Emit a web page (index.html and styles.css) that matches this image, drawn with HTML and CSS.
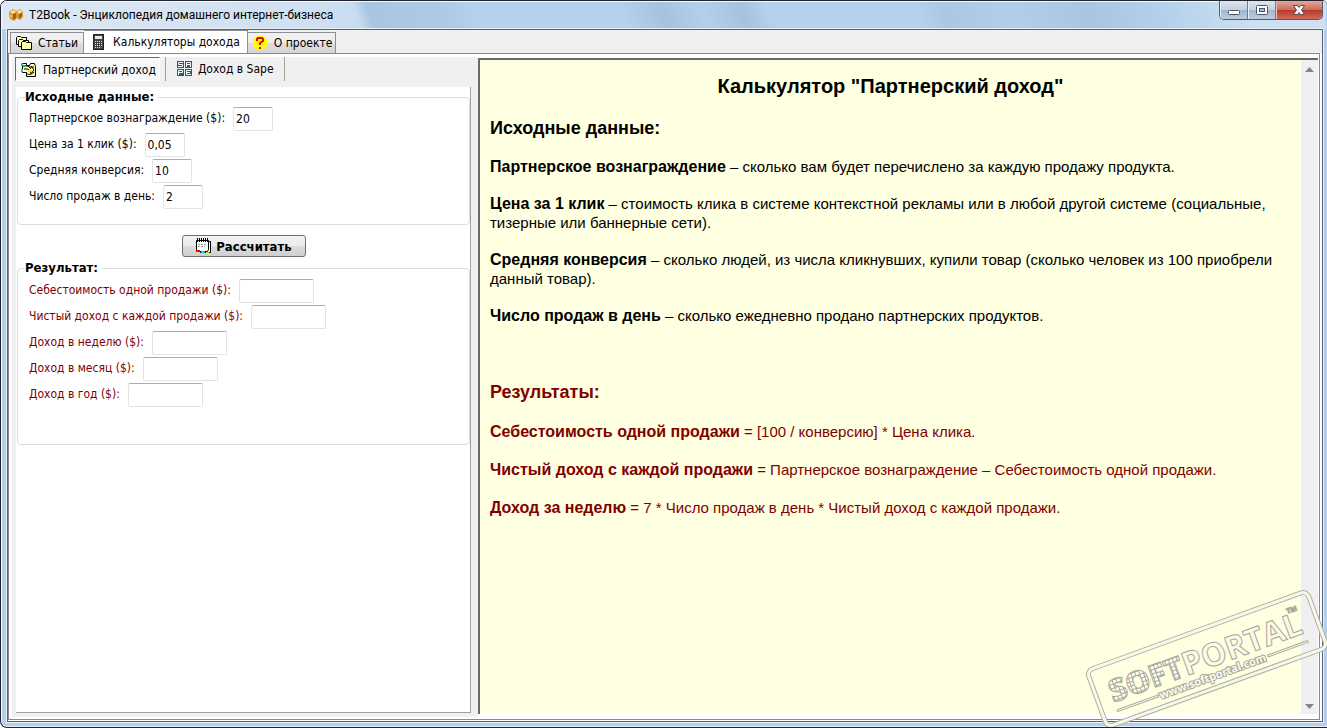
FILE: index.html
```html
<!DOCTYPE html>
<html lang="ru">
<head>
    <meta charset="UTF-8">
    <meta name="viewport" content="width=device-width, initial-scale=1.0">
    <title>T2Book - Энциклопедия домашнего интернет-бизнеса</title>
    <link rel="stylesheet" href="styles.css">
</head>
<body>
<div class="window">
    <header class="titlebar">
        <svg class="app-icon" width="16" height="16" viewBox="0 0 16 16">
            <path d="M1 5l4-3 3 2 4-2 3 3v5l-3 3-3-2-3 3-4-2-1-4z" fill="#d9962a"/>
            <path d="M2 5l3-2 3 2-3 2zM9 4l3-1 2 2-3 2z" fill="#ffe39a"/>
            <path d="M5 7v6l3-2V6zM11 7v5l3-3V6z" fill="#a5600f"/>
            <path d="M2 7l2 2v2l-2-2z" fill="#f7c552"/>
        </svg>
        <h1>T2Book - Энциклопедия домашнего интернет-бизнеса</h1>
        <div class="win-buttons">
            <button type="button" aria-label="Свернуть">
                <svg width="14" height="12" viewBox="0 0 14 12"><rect x="1.5" y="6.5" width="11" height="4" rx="1" fill="#fff" stroke="#4b5566"/></svg>
            </button>
            <button type="button" aria-label="Развернуть">
                <svg width="14" height="12" viewBox="0 0 14 12"><rect x="1.5" y="1.5" width="11" height="9" rx="1" fill="#fff" stroke="#4b5566"/><rect x="4.5" y="4.5" width="5" height="3" fill="#a9bdd6" stroke="#4b5566"/></svg>
            </button>
            <button type="button" class="close" aria-label="Закрыть">
                <svg width="14" height="12" viewBox="0 0 14 12"><path d="M1.500 1.500h4L7 3.500l1.500-2h4L9.500 6l3 4.500h-4L7 8.500l-1.500 2h-4L4.500 6z" fill="#fff" stroke="#5b4a52"/></svg>
            </button>
        </div>
    </header>
    <div class="client">
        <nav class="tabs">
            <button type="button">
                <svg width="16" height="16" viewBox="0 0 16 16" stroke="#000" fill="#ffffb0">
                    <path d="M.5 9.500v-7l1-1h3l1 1h5v7z"/>
                    <path d="M2.500 11.500v-6l1-1h3l1 1h5v6z"/>
                    <path d="M5.500 14.500v-7l1-1h3l1 1h5v7z"/>
                </svg>
                Статьи
            </button>
            <button type="button" class="active">
                <svg width="16" height="16" viewBox="0 0 16 16">
                    <rect x="2.500" y=".5" width="10" height="15" fill="#444" stroke="#222"/>
                    <path d="M4 2h7v3H4z" fill="#e8e8e8"/>
                    <path d="M4 7.500h7M4 9.500h7M4 11.500h7M4 13.500h5" stroke="#ddd" stroke-dasharray="1 1"/>
                    <path d="M9 13.500h2" stroke="#e02020"/>
                </svg>
                Калькуляторы дохода
            </button>
            <button type="button" class="about">
                <svg width="16" height="16" viewBox="0 0 16 16">
                    <path d="M5 1h6l4 4v6l-4 4H5l-4-4V5z" fill="#ff0"/>
                    <path d="M5 6V4l1-1h4l1 1v2L8 8v2" fill="none" stroke="#e00" stroke-width="2"/>
                    <path d="M7 12h2v2H7z" fill="#e00"/>
                </svg>
                О проекте
            </button>
        </nav>
        <main class="page">
            <section class="calc">
                <nav class="subtabs">
                    <button type="button" class="pressed">
                        <svg width="16" height="16" viewBox="0 0 16 16">
                            <path d="M1.500 1.500h4v2h3l1-2h4l1 3v10h-9v-4h-4z" fill="#ffffb0" stroke="#000"/>
                            <path d="M0 1h2v3H0zM0 7h2v3H0z" fill="#00c8d8"/>
                            <path d="M2 4h5l3 3M3 7h4l3 4M8 5h5M9 13l4-5M5 11c2 2 5 2 8-1M10 4l3 4" fill="none" stroke="#000"/>
                            <path d="M7 8h4v2H7z" fill="#ffe600"/>
                        </svg>
                        Партнерский доход
                    </button>
                    <button type="button">
                        <svg width="16" height="16" viewBox="0 0 16 16">
                            <path d="M1 0h7v7H1zM9 0h7v7H9zM1 8h7v7H1zM9 8h7v7H9z" fill="#17637f"/>
                            <path d="M7 1.500H2.500v2h4v2H2M10.500 6V1.500h4V6M10.500 3.500h4M2.500 14V9.500h4v2h-4M15 9.500h-4.500v4H15M10.500 11.500H14" fill="none" stroke="#fff"/>
                        </svg>
                        Доход в Sape
                    </button>
                </nav>
                <form class="panel">
                    <fieldset class="source">
                        <legend>Исходные данные:</legend>
                        <div class="row"><label for="reward">Партнерское вознаграждение ($):</label><input type="text" id="reward" value="20"></div>
                        <div class="row"><label for="click">Цена за 1 клик ($):</label><input type="text" id="click" value="0,05"></div>
                        <div class="row"><label for="conv">Средняя конверсия:</label><input type="text" id="conv" value="10"></div>
                        <div class="row"><label for="sales">Число продаж в день:</label><input type="text" id="sales" value="2"></div>
                    </fieldset>
                    <button type="button" class="calculate">
                        <svg width="17" height="16" viewBox="0 0 17 16">
                            <path d="M4.500 3.500h11v11h-10z" fill="#fff" stroke="#000"/>
                            <path d="M1.500 2.500h12v9l-1 2h-11z" fill="#fff" stroke="#000"/>
                            <path d="M2.500 0v4M4.500 0v4M6.500 0v4M8.500 0v4M10.500 0v4M12.500 0v4" stroke="#000"/>
                            <path d="M3 6.500h8M3 8.500h7" stroke="#999" stroke-dasharray="2 1"/>
                            <path d="M1 12h4v2H1z" fill="#e00"/>
                            <path d="M6 13h4v2H6z" fill="#00c8d8"/>
                            <path d="M11 14h3v2h-3z" fill="#ffe600"/>
                        </svg>
                        Рассчитать
                    </button>
                    <fieldset class="result">
                        <legend>Результат:</legend>
                        <div class="row"><label for="cost">Себестоимость одной продажи ($):</label><input type="text" id="cost"></div>
                        <div class="row"><label for="net">Чистый доход с каждой продажи ($):</label><input type="text" id="net"></div>
                        <div class="row"><label for="week">Доход в неделю ($):</label><input type="text" id="week"></div>
                        <div class="row"><label for="month">Доход в месяц ($):</label><input type="text" id="month"></div>
                        <div class="row"><label for="year">Доход в год ($):</label><input type="text" id="year"></div>
                    </fieldset>
                </form>
            </section>
            <section class="help">
                <article>
                    <h2>Калькулятор "Партнерский доход"</h2>
                    <h3>Исходные данные:</h3>
                    <p><b>Партнерское вознаграждение</b> – сколько вам будет перечислено за каждую продажу продукта.</p>
                    <p><b>Цена за 1 клик</b> – стоимость клика в системе контекстной рекламы или в любой другой системе (социальные, тизерные или баннерные сети).</p>
                    <p><b>Средняя конверсия</b> – сколько людей, из числа кликнувших, купили товар (сколько человек из 100 приобрели данный товар).</p>
                    <p><b>Число продаж в день</b> – сколько ежедневно продано партнерских продуктов.</p>
                    <div class="formulas">
                        <h3>Результаты:</h3>
                        <p><b>Себестоимость одной продажи</b> = [100 / конверсию] * Цена клика.</p>
                        <p><b>Чистый доход с каждой продажи</b> = Партнерское вознаграждение – Себестоимость одной продажи.</p>
                        <p><b>Доход за неделю</b> = 7 * Число продаж в день * Чистый доход с каждой продажи.</p>
                    </div>
                </article>
                <div class="scrollbar">
                    <svg width="9" height="5" viewBox="0 0 9 5"><path d="M0 5l4.500-5L9 5z" fill="#85858a"/></svg>
                    <svg width="9" height="5" viewBox="0 0 9 5"><path d="M0 0l4.500 5L9 0z" fill="#85858a"/></svg>
                </div>
            </section>
        </main>
    </div>
    <!-- штамп поверх окна -->
    <svg class="stamp" width="242" height="140" viewBox="0 0 242 140">
        <defs>
            <pattern id="grid" width="4" height="4" patternUnits="userSpaceOnUse">
                <rect width="4" height="4" fill="#aaaa9c"/>
                <rect width="3" height="3" fill="#fffff4"/>
            </pattern>
        </defs>
        <g transform="translate(122 71) rotate(-20)">
            <rect x="-117" y="-30" width="234" height="60" rx="6" fill="none" stroke="#b0b0a4" stroke-width="5"/>
            <rect x="-117" y="-30" width="234" height="60" rx="6" fill="none" stroke="#f8f8ea" stroke-width="3"/>
            <text class="stamp-soft" x="-103" y="9">SOFT</text>
            <text class="stamp-portal" x="-25" y="9">PORTAL</text>
            <text class="stamp-tm" x="91" y="-15">TM</text>
            <text class="stamp-url" x="-57" y="22">www.softportal.com</text>
            <path d="M-101 18h42M59 18h41" stroke="#a8a89c" stroke-width="3" stroke-linecap="round"/>
            <path d="M-101 18h42M59 18h41" stroke="#f8f8ea" stroke-linecap="round"/>
        </g>
    </svg>
</div>
</body>
</html>
```
FILE: styles.css
```css
* {
    box-sizing: border-box;
}
body {
    margin: 0;
    background-color: #fff;
    font-family: "DejaVu Sans Condensed", "DejaVu Sans", sans-serif;
    font-stretch: condensed;
    font-size: 12px;
    color: #000;
}
button, input {
    font: inherit;
    color: inherit;
}
svg {
    display: block;
    flex: none;
}

/* окно */
.window {
    position: relative;
    display: flex;
    flex-direction: column;
    min-height: 100vh;
    padding: 0 3px 5px 5px;
    border: 1px solid #22242e;
    border-right: none;
    border-radius: 7px 5px 0 7px;
    background-color: #b5cfea;
    box-shadow: inset 1px 1px 0 #f4f9fd, inset 0 -1px 0 #e4effa;
    overflow: hidden;
}
.titlebar {
    display: flex;
    align-items: center;
    height: 28px;
    margin: 0 -2px 0 -5px;
    padding-left: 7px;
    background: linear-gradient(70deg, transparent 27%, #a9c5e0 28%, #aecae4 34%, #b5d2ec 36%, #b5d2ec 47%, #a6c2de 50%, #b3cfea 53%, #a6c2de 56%, #b5d2ec 58%, #b5d2ec 69%, #abc7e2 71%, #b1cfea 76%, #a9c6e1 82%, #b5d2ec 88%, #cddff0 94%), linear-gradient(to right, #dde8f4, #cfe0f2 24%, #b5d2ec 34%);
    box-shadow: inset 1px 1px 0 #f4f9fd;
}
.titlebar h1 {
    flex: 1;
    margin: 0 0 0 5px;
    font-family: Roboto, sans-serif;
    font-stretch: normal;
    font-size: 12px;
    font-weight: normal;
}
.win-buttons {
    display: flex;
    align-self: flex-start;
    margin-right: 3px;
    border: 1px solid #525c6c;
    border-top: none;
    border-radius: 0 0 5px 5px;
    overflow: hidden;
}
.win-buttons button {
    display: flex;
    justify-content: center;
    align-items: center;
    width: 28px;
    height: 18px;
    padding: 0;
    border: none;
    border-right: 1px solid #6f7d90;
    background: linear-gradient(#dde6f0, #c3d0e0 50%, #a1b5cd 51%, #bccde0);
    box-shadow: inset 1px 0 0 #e9f0f7;
}
.win-buttons .close {
    width: 46px;
    border-right: none;
    background: linear-gradient(#e3a79d, #cf6a5b 50%, #b8392a 51%, #cf6b55);
    box-shadow: inset 1px 0 0 #ecc0b8;
}
.client {
    flex: 1;
    display: flex;
    flex-direction: column;
    padding: 0 2px 1px 0;
    border: 1px solid #566372;
    outline: 1px solid #e6f0f9;
    margin: 0 1px 0 1px;
    background: linear-gradient(#efefef 24px, #fff 24px);
}

/* вкладки */
.tabs {
    display: flex;
    align-items: flex-end;
    height: 23px;
    padding-left: 2px;
}
.tabs button {
    display: flex;
    align-items: center;
    gap: 6px;
    height: 21px;
    padding: 0 5px;
    border: 1px solid #8c8e94;
    border-bottom: none;
    background: linear-gradient(#f2f2f2, #ececec 50%, #dedede 51%, #d4d4d4);
    white-space: nowrap;
}
.tabs button + button {
    border-left: none;
}
.tabs .active {
    height: 24px;
    margin-bottom: -1px;
    padding: 0 7px 2px;
    background: #fff;
}
.tabs .about {
    padding: 0 3px 0 4px;
}
.page {
    flex: 1;
    display: grid;
    grid-template-columns: 466px 1fr;
    padding: 3px 1px 2px 3px;
    border: 1px solid #868a96;
    background-color: #fff;
}
.calc {
    display: flex;
    flex-direction: column;
    padding: 0 7px 4px 4px;
    background-color: #f0f0f0;
}
.subtabs {
    display: flex;
    height: 30px;
    margin-left: -1px;
}
.subtabs button {
    display: flex;
    align-items: center;
    gap: 6px;
    height: 24px;
    padding: 0 10px;
    border: none;
    border-right: 1px solid #a0a0a0;
    background: none;
    white-space: nowrap;
}
.subtabs .pressed {
    margin-right: 6px;
    padding: 1px 3px 0 5px;
    border: 1px solid #fff;
    border-top-color: #696969;
    border-left-color: #696969;
    background-color: #f8f8f8;
    box-shadow: 5px 0 0 #f0f0f0, 6px 0 0 #a0a0a0;
}

/* форма */
.panel {
    flex: 1;
    display: flex;
    flex-direction: column;
    padding: 3px 0 0 1px;
    border-right: 1px solid #a0a0a0;
    border-bottom: 1px solid #a0a0a0;
    background-color: #fff;
}
fieldset {
    min-width: 0;
    margin: 0;
    padding: 3px 11px 0;
    border: 1px solid #d5dfe5;
    border-radius: 4px;
}
.source {
    min-height: 135px;
}
.result {
    min-height: 184px;
    padding-top: 4px;
    color: #800000;
}
legend {
    margin-left: -4px;
    padding: 0 4px 0 0;
    font-size: 13px;
    font-weight: bold;
    line-height: 14px;
    color: #000;
}
.row {
    display: flex;
    gap: 8px;
    height: 24px;
    margin-bottom: 2px;
}
.row label {
    line-height: 22px;
    white-space: nowrap;
}
.row input {
    width: 40px;
    height: 24px;
    padding: 0 2px;
    border: 1px solid #e2e3ea;
    border-top-color: #abadb3;
    border-radius: 2px;
    background-color: #fff;
}
.result input {
    width: 75px;
}
.calculate {
    align-self: center;
    display: flex;
    align-items: center;
    justify-content: center;
    gap: 4px;
    width: 124px;
    height: 22px;
    margin: 10px 0 4px;
    padding: 0;
    border: 1px solid #707070;
    border-radius: 3px;
    background: linear-gradient(#f2f2f2, #ebebeb 50%, #dddddd 51%, #cfcfcf);
    font-size: 13px;
    font-weight: bold;
}

/* справка */
.help {
    display: flex;
    margin: 1px 0 3px;
    border: 2px solid #696969;
    border-right: none;
    border-bottom: none;
    background-color: #ffffe1;
    font-family: "Liberation Sans", Arial, sans-serif;
    font-stretch: normal;
    font-size: 16px;
    line-height: 19px;
}
.help article {
    flex: 1;
    padding: 14px 10px 0;
}
.help h2 {
    margin: 0;
    font-size: 20px;
    line-height: 24px;
    text-align: center;
}
.help h3 {
    margin: 20px 0 18px;
    font-size: 18px;
    line-height: 21px;
}
.help p {
    margin: 18px 0;
    font-size: 15px;
}
.help b {
    font-size: 16px;
    line-height: 16px;
}
.formulas {
    margin-top: 57px;
    color: #800000;
}
.formulas p {
    margin: 19px 0;
}
.scrollbar {
    display: flex;
    flex-direction: column;
    justify-content: space-between;
    align-items: center;
    width: 17px;
    padding: 7px 0 5px;
    background-color: #f0f0f2;
}

.stamp {
    position: absolute;
    right: 0;
    bottom: -1px;
    font-family: "Open Sans", sans-serif;
    font-stretch: normal;
    font-weight: bold;
}
.stamp text {
    fill: #fbfbea;
    stroke: #a8a89c;
    stroke-width: 1px;
}
.stamp .stamp-soft {
    font-size: 31px;
    font-weight: 800;
    fill: url(#grid);
}
.stamp .stamp-portal {
    font-size: 32px;
}
.stamp .stamp-tm {
    font-size: 7px;
}
.stamp .stamp-url {
    font-size: 11px;
    paint-order: stroke;
    stroke-width: 2px;
}
```
